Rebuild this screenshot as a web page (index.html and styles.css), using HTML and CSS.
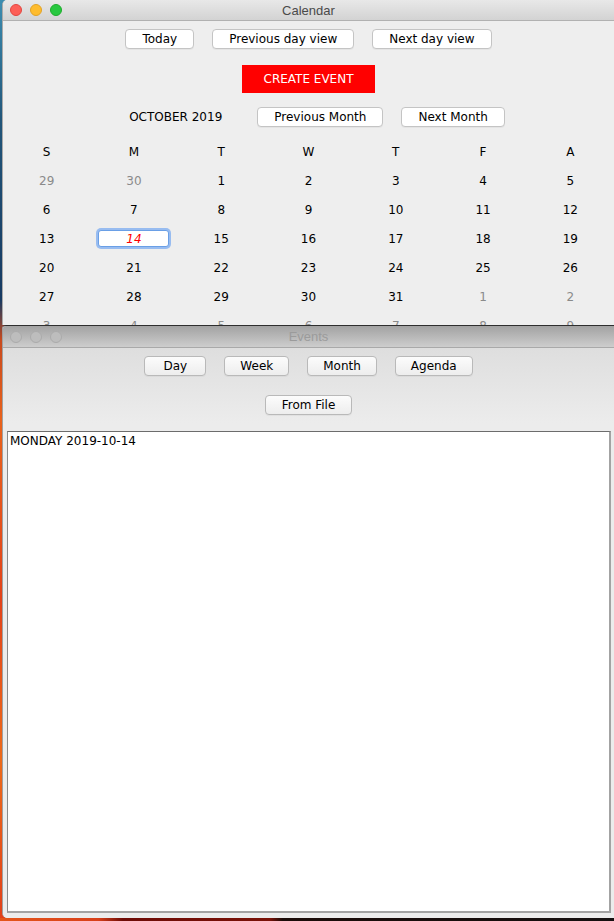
FILE: index.html
```html
<!DOCTYPE html>
<html>
<head>
<meta charset="utf-8">
<title>Calendar</title>
<link rel="stylesheet" href="styles.css">
</head>
<body>
<div class="desktop">
  <div class="window calendar">
    <div class="titlebar active">
      <div class="lights">
        <span class="light red"></span><span class="light yellow"></span><span class="light green"></span>
      </div>
      <div class="title">Calendar</div>
      <div></div>
    </div>
    <div class="content">
      <div class="toolbar">
        <button class="btn">Today</button>
        <button class="btn">Previous day view</button>
        <button class="btn">Next day view</button>
      </div>
      <div class="create-row">
        <button class="create">CREATE EVENT</button>
      </div>
      <div class="toolbar month-row">
        <span class="month-label">OCTOBER 2019</span>
        <button class="btn">Previous Month</button>
        <button class="btn">Next Month</button>
      </div>
      <div class="grid">
        <div class="cell">S</div><div class="cell">M</div><div class="cell">T</div><div class="cell">W</div><div class="cell">T</div><div class="cell">F</div><div class="cell">A</div>
        <div class="cell muted">29</div><div class="cell muted">30</div><div class="cell">1</div><div class="cell">2</div><div class="cell">3</div><div class="cell">4</div><div class="cell">5</div>
        <div class="cell">6</div><div class="cell">7</div><div class="cell">8</div><div class="cell">9</div><div class="cell">10</div><div class="cell">11</div><div class="cell">12</div>
        <div class="cell">13</div><div class="cell"><span class="selected">14</span></div><div class="cell">15</div><div class="cell">16</div><div class="cell">17</div><div class="cell">18</div><div class="cell">19</div>
        <div class="cell">20</div><div class="cell">21</div><div class="cell">22</div><div class="cell">23</div><div class="cell">24</div><div class="cell">25</div><div class="cell">26</div>
        <div class="cell">27</div><div class="cell">28</div><div class="cell">29</div><div class="cell">30</div><div class="cell">31</div><div class="cell muted">1</div><div class="cell muted">2</div>
        <div class="cell muted">3</div><div class="cell muted">4</div><div class="cell muted">5</div><div class="cell muted">6</div><div class="cell muted">7</div><div class="cell muted">8</div><div class="cell muted">9</div>
      </div>
    </div>
  </div>
  <div class="window events">
    <div class="titlebar inactive">
      <div class="lights">
        <span class="light off"></span><span class="light off"></span><span class="light off"></span>
      </div>
      <div class="title">Events</div>
      <div></div>
    </div>
    <div class="content events-content">
      <div class="toolbar">
        <button class="btn soft day">Day</button>
        <button class="btn soft">Week</button>
        <button class="btn soft">Month</button>
        <button class="btn soft">Agenda</button>
      </div>
      <div class="toolbar file-row">
        <button class="btn soft wide">From File</button>
      </div>
      <div class="log">MONDAY 2019-10-14</div>
    </div>
  </div>
</div>
</body>
</html>
```

FILE: styles.css
```css
html, body {
  margin: 0;
  padding: 0;
}

body {
  width: 614px;
  height: 921px;
  overflow: hidden;
  font-family: "DejaVu Sans", sans-serif;
  font-size: 12px;
  color: #000;
}

.desktop {
  width: 614px;
  height: 921px;
  box-sizing: border-box;
  padding-left: 2px;
  display: flex;
  flex-direction: column;
  background:
    linear-gradient(to right, #e4561b 0, #d8401a 16%, #6e0c07 20%, #7a1208 44%, #1b0b08 46%, #151010 100%) bottom / 100% 3px no-repeat,
    linear-gradient(to bottom, #3c8db0 0, #22567a 120px, #173a62 300px, #c84a1e 340px, #e8621c 420px, #e2431a 600px, #ec6a1a 760px, #e0401a 921px);
}

.window {
  display: flex;
  flex-direction: column;
  box-sizing: border-box;
  overflow: hidden;
}

.calendar {
  height: 325px;
  flex: none;
  background: #eeeeee;
  border-left: 1px solid #a9a9a9;
  border-top-left-radius: 5px;
}

.events {
  height: 593px;
  flex: none;
  background: #ececec;
  border-left: 1px solid #a0a0a0;
  border-top: 1px solid #2e2e2e;
  border-radius: 4px 0 0 5px;
}

.titlebar {
  display: grid;
  grid-template-columns: 1fr auto 1fr;
  align-items: center;
  flex: none;
  font-family: "Liberation Sans", Arial, sans-serif;
  font-size: 13px;
}

.titlebar.active {
  height: 20px;
  background: linear-gradient(#e8e8e8, #d3d3d3);
  border-bottom: 1px solid #b1b1b1;
  color: #4a4a4a;
}

.titlebar.inactive {
  height: 21px;
  background: linear-gradient(#a2a2a2, #cdcdcd);
  border-bottom: 1px solid #a9a9a9;
  color: #9b9b9b;
}

.lights {
  display: flex;
  gap: 8px;
  padding-left: 7px;
}

.light {
  width: 12px;
  height: 12px;
  border-radius: 50%;
  box-sizing: border-box;
}

.light.red { background: #fd5f57; border: 1px solid #e2463f; }
.light.yellow { background: #febc2e; border: 1px solid #e0a226; }
.light.green { background: #28c840; border: 1px solid #1eac2c; }
.light.off { background: #bdbdbd; border: 1px solid #ababab; }

.title {
  text-align: center;
}

.content {
  display: flex;
  flex-direction: column;
  flex: 1;
}

.toolbar {
  display: flex;
  justify-content: center;
  align-items: center;
  gap: 18px;
  margin-top: 8px;
}

.btn {
  font-family: "DejaVu Sans", sans-serif;
  font-size: 12px;
  color: #000;
  height: 20px;
  line-height: 18px;
  padding: 0 16px;
  box-sizing: border-box;
  border: 1px solid #c4c4c4;
  border-radius: 4px;
  background: #ffffff;
  box-shadow: 0 1px 0 rgba(0, 0, 0, 0.04);
}

.btn.soft {
  padding: 0 15px;
  background: linear-gradient(#fcfcfc, #ededed);
  border-color: #b9b9b9;
}

.btn.soft.wide {
  padding: 0 16px;
}

.btn.day {
  min-width: 62px;
}

.create-row {
  display: flex;
  justify-content: center;
  margin-top: 16px;
}

.create {
  font-family: "DejaVu Sans", sans-serif;
  font-size: 12px;
  color: #ffffff;
  height: 28px;
  padding: 0 22px;
  border: none;
  background: #ff0000;
}

.month-row {
  margin-top: 14px;
}

.month-label {
  padding: 0 17px;
  line-height: 20px;
}

.grid {
  display: grid;
  grid-template-columns: repeat(7, 1fr);
  grid-auto-rows: 29px;
  margin-top: 10px;
}

.cell {
  display: flex;
  align-items: center;
  justify-content: center;
}

.cell.muted {
  color: #8a8a8a;
}

.selected {
  width: 71px;
  height: 17px;
  box-sizing: border-box;
  display: flex;
  align-items: center;
  justify-content: center;
  background: #fff;
  border: 1px solid #6a9fe6;
  border-radius: 3px;
  box-shadow: 0 0 0 2px rgba(130, 175, 240, 0.8);
  color: #ff0000;
  font-style: italic;
}

.events-content {
  background: linear-gradient(#dedede, #ececec 75px);
}

.file-row {
  margin-top: 19px;
}

.log {
  flex: 1;
  margin: 16px 3px 5px 4px;
  background: #ffffff;
  border: 1px solid #999999;
  border-top-color: #6c6c6c;
  border-left-color: #8a8a8a;
  border-right-width: 2px;
  border-bottom-width: 2px;
  border-right-color: #a3a3a3;
  border-bottom-color: #a3a3a3;
  padding: 2px 2px;
  line-height: 15px;
}
```
